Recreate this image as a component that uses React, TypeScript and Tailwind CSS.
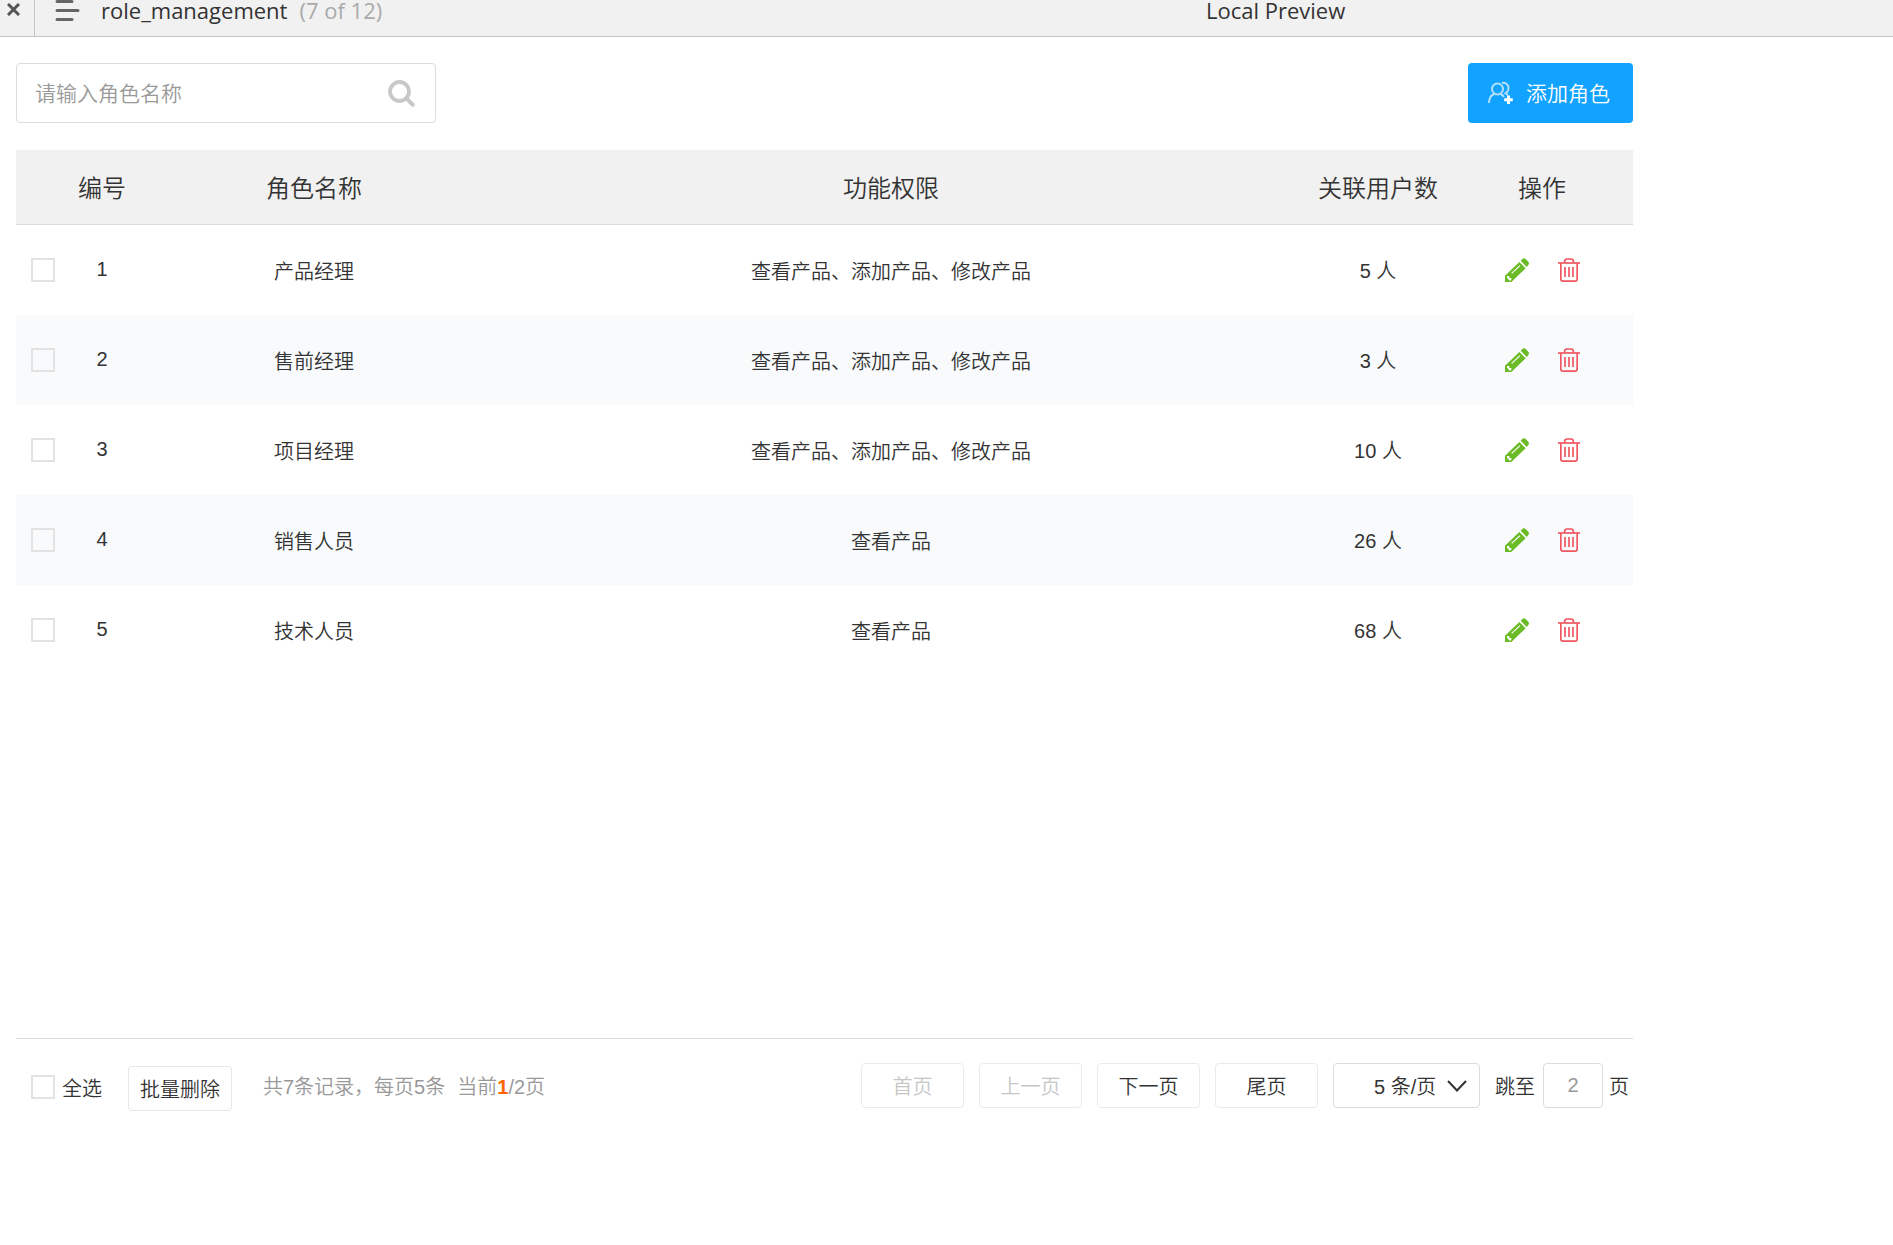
import { useState } from "react";

type Role = {
  id: number;
  name: string;
  permissions: string;
  users: number;
};

const roles: Role[] = [
  { id: 1, name: "产品经理", permissions: "查看产品、添加产品、修改产品", users: 5 },
  { id: 2, name: "售前经理", permissions: "查看产品、添加产品、修改产品", users: 3 },
  { id: 3, name: "项目经理", permissions: "查看产品、添加产品、修改产品", users: 10 },
  { id: 4, name: "销售人员", permissions: "查看产品", users: 26 },
  { id: 5, name: "技术人员", permissions: "查看产品", users: 68 },
];

const checkboxStyle =
  "block size-6 shrink-0 appearance-none border-2 border-[#e2e2e2] checked:border-[#12a2ff] checked:bg-[#12a2ff]";

const pageBtnStyle =
  "h-[45px] w-[103px] rounded border border-[#ebebeb] pt-0.5 text-[#333] disabled:text-[#c6c6c6]";

function PencilIcon() {
  return (
    <svg viewBox="0 0 72 72" className="size-6" aria-hidden="true">
      <path d="M0 53 L43 12 L62 31 L19 72 L0 72 Z" fill="#6abb25" />
      <path d="M47 8 L52 3 Q57 -2 62 3 L70 11 Q74 16 70 21 L65 27 Z" fill="#6abb25" />
      <path d="M20 46 L45 23" stroke="#fff" strokeWidth="3.5" />
      <path d="M7 54 L13 54 L13 60 L19 60 L19 66 L14 68 L5 58 Z" fill="#fff" />
    </svg>
  );
}

function TrashIcon() {
  return (
    <svg viewBox="0 0 66 72" className="h-6 w-[22px]" fill="none" stroke="#f0565f" strokeWidth="5" aria-hidden="true">
      <path d="M0 15 H66" />
      <path d="M20 14 V10 Q20 3 27 3 H39 Q46 3 46 10 V14" />
      <path d="M8.5 15 V63 Q8.5 69.500 15 69.500 H51 Q57.500 69.500 57.500 63 V15" />
      <path d="M21 27 V57 M33 27 V57 M45 27 V57" />
    </svg>
  );
}

function AddUserIcon() {
  return (
    <svg viewBox="0 0 26 24" className="h-6 w-[26px]" fill="none" stroke="#b5e0ff" strokeWidth="2" aria-hidden="true">
      <circle cx="9.500" cy="8" r="5.500" />
      <path d="M1 22 C1 17 3 14 6.500 13 M12.500 13 C14 13.500 15 14.500 16 16" />
      <path d="M14 2 C18 1 21 4 20.500 8 C20.300 10 19 11.500 17.500 12.300 L20 14" />
      <path d="M20.500 14.500 V23 M16.200 18.700 H24.800" stroke="#fff" strokeWidth="3" />
    </svg>
  );
}

export default function App() {
  const [keyword, setKeyword] = useState("");
  const [selected, setSelected] = useState<number[]>([]);
  const [target, setTarget] = useState("2");

  const toggle = (id: number) => {
    setSelected(selected.includes(id) ? selected.filter((s) => s !== id) : [...selected, id]);
  };

  const allSelected = selected.length === roles.length;

  return (
    <div className="min-h-screen bg-white font-['Liberation_Sans','Noto_Sans_CJK_SC',sans-serif] text-xl font-[350] text-[#333]">
      <header className="flex h-[37px] border-b border-[#c5c5c5] bg-[#f1f1f1] font-['Open_Sans',sans-serif] text-[22px] leading-5 font-normal">
        <button aria-label="关闭" className="flex w-[35px] items-start border-r border-[#c5c5c5] pt-[3px] pl-[7px]">
          <svg viewBox="0 0 13 13" className="size-[13px]" stroke="#555" strokeWidth="3" aria-hidden="true">
            <path d="M1 1 L12 12 M12 1 L1 12" />
          </svg>
        </button>
        <button aria-label="菜单" className="ml-5 flex items-start">
          <svg viewBox="0 0 25 22" className="h-[22px] w-[25px]" stroke="#666" strokeWidth="3" strokeLinecap="round" aria-hidden="true">
            <path d="M2 1.500 H17 M2 10.500 H23 M2 19.500 H17" />
          </svg>
        </button>
        <div className="flex flex-1 gap-3 pl-[21px]">
          <h1>role_management</h1>
          <span className="text-[#aaa]">(7 of 12)</span>
        </div>
        <p className="w-[687px]">Local Preview</p>
      </header>

      <main className="mr-65 ml-4 pt-[26px]">
        <div className="flex items-center justify-between">
          <label className="flex h-[60px] w-[420px] items-center rounded border border-[#dcdcdc] pr-5 pl-[18px]">
            <input
              type="text"
              aria-label="角色名称"
              placeholder="请输入角色名称"
              value={keyword}
              onChange={(e) => setKeyword(e.target.value)}
              className="min-w-0 flex-1 pt-0.5 text-[21px] outline-none placeholder:text-[#999]"
            />
            <svg viewBox="0 0 27 27" className="size-[27px]" fill="none" stroke="#c8c8c8" aria-hidden="true">
              <circle cx="11.500" cy="11.500" r="9.500" strokeWidth="3.800" />
              <path d="M18.500 18.500 L24.800 24.800" strokeWidth="4" strokeLinecap="round" />
            </svg>
          </label>
          <button className="flex h-[60px] w-[165px] items-center gap-3 rounded bg-[#12a2ff] pl-5 text-[21px] text-white">
            <AddUserIcon />
            <span className="pt-0.5">添加角色</span>
          </button>
        </div>

        <div className="mt-[27px] min-h-[889px] border-b border-[#dcdcdc]">
          <table className="w-full table-fixed border-separate border-spacing-0 text-center">
            <colgroup>
              <col className="w-[55px]" />
              <col className="w-[62px]" />
              <col className="w-[362px]" />
              <col />
              <col className="w-[182px]" />
              <col className="w-[164px]" />
            </colgroup>
            <thead>
              <tr className="h-[75px] bg-[#f1f1f1] text-2xl [&>th]:border-b [&>th]:border-[#dcdcdc] [&>th]:pt-1 [&>th]:font-[350]">
                <th aria-label="选择"></th>
                <th>编号</th>
                <th>角色名称</th>
                <th>功能权限</th>
                <th>关联用户数</th>
                <th className="pr-[18px]">操作</th>
              </tr>
            </thead>
            <tbody>
              {roles.map((role) => (
                <tr key={role.id} className="h-[90px] even:bg-[#f8fafc]">
                  <td className="pl-[15px]">
                    <input
                      type="checkbox"
                      aria-label={role.name}
                      checked={selected.includes(role.id)}
                      onChange={() => toggle(role.id)}
                      className={checkboxStyle}
                    />
                  </td>
                  <td className="pb-0.5">{role.id}</td>
                  <td className="pt-1">{role.name}</td>
                  <td className="pt-1">{role.permissions}</td>
                  <td className="pt-0.5">{role.users} 人</td>
                  <td className="pr-[18px]">
                    <div className="flex justify-center gap-[29px]">
                      <button aria-label="编辑"><PencilIcon /></button>
                      <button aria-label="删除"><TrashIcon /></button>
                    </div>
                  </td>
                </tr>
              ))}
            </tbody>
          </table>
        </div>

        <footer className="flex items-start justify-between pt-6 pr-1">
          <div className="flex items-center pl-[15px]">
            <label className="flex items-center gap-[7px]">
              <input
                type="checkbox"
                checked={allSelected}
                onChange={() => setSelected(allSelected ? [] : roles.map((r) => r.id))}
                className={checkboxStyle}
              />
              <span className="pt-1">全选</span>
            </label>
            <button className="mt-[3px] ml-[26px] h-[45px] w-[104px] rounded border border-[#e6e6e6] pt-0.5">批量删除</button>
            <p className="ml-[31px] text-[#999]">
              共7条记录，每页5条<span className="ml-3">当前<b className="text-[#f60]">1</b>/2页</span>
            </p>
          </div>

          <nav className="flex items-center gap-[15px]" aria-label="分页">
            <button className={pageBtnStyle} disabled>首页</button>
            <button className={pageBtnStyle} disabled>上一页</button>
            <button className={pageBtnStyle}>下一页</button>
            <button className={pageBtnStyle}>尾页</button>
            <div className="grid h-[45px] w-[147px] items-center rounded border border-[#dcdcdc]">
              <select aria-label="每页条数" className="col-start-1 row-start-1 h-full appearance-none pt-0.5 pl-10 outline-none">
                <option>5 条/页</option>
                <option>10 条/页</option>
              </select>
              <svg viewBox="0 0 20 12" className="pointer-events-none col-start-1 row-start-1 mr-3 h-3 w-5 justify-self-end" fill="none" stroke="#333" strokeWidth="2" aria-hidden="true">
                <path d="M1 1 L10 10.500 L19 1" />
              </svg>
            </div>
            <label className="flex items-center gap-2">
              <span className="pt-0.5">跳至</span>
              <input
                type="text"
                value={target}
                onChange={(e) => setTarget(e.target.value)}
                className="h-[45px] w-[60px] rounded border border-[#dcdcdc] text-center text-[#999] outline-none"
              />
              <span className="-ml-0.5 pt-0.5">页</span>
            </label>
          </nav>
        </footer>
      </main>
    </div>
  );
}
